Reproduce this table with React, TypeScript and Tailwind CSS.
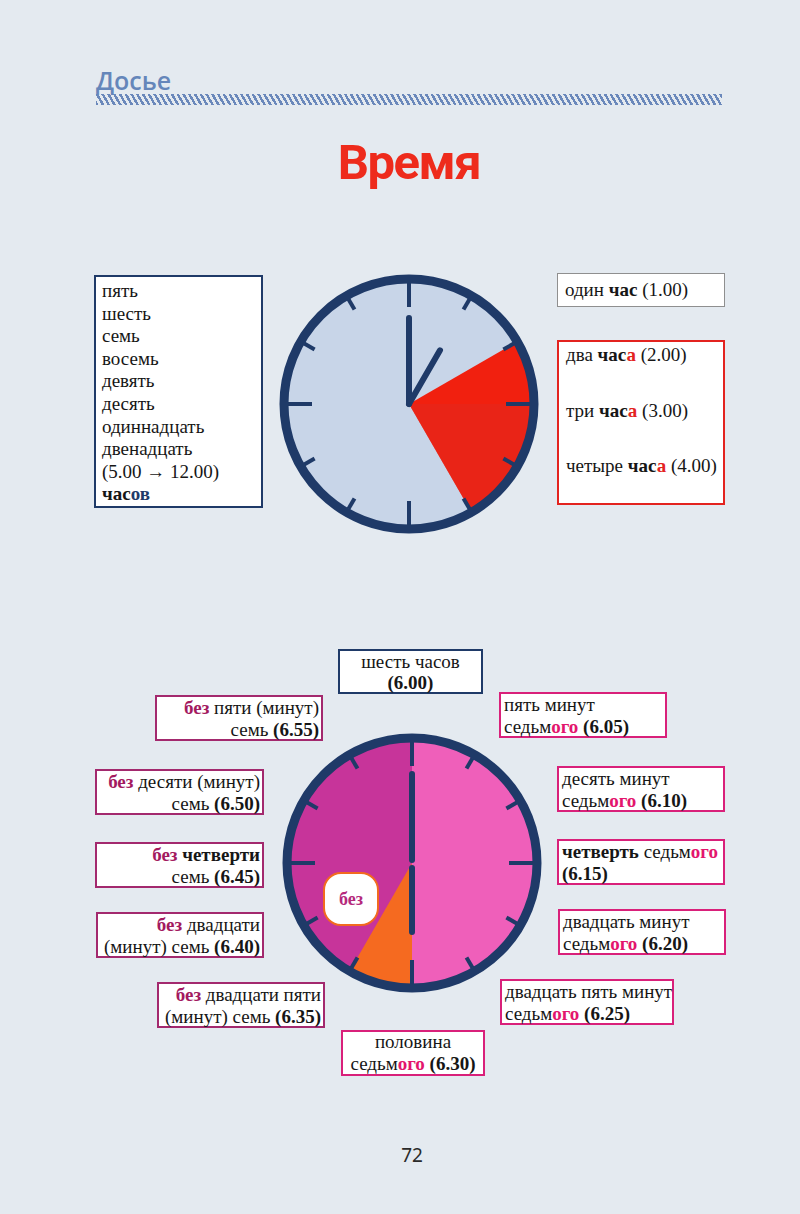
import React from 'react';

const NAVY = '#1f3a68';

function pt(cx: number, cy: number, r: number, deg: number) {
  const a = ((deg - 90) * Math.PI) / 180;
  return [cx + r * Math.cos(a), cy + r * Math.sin(a)];
}

function sector(cx: number, cy: number, r: number, a0: number, a1: number) {
  const [x0, y0] = pt(cx, cy, r, a0);
  const [x1, y1] = pt(cx, cy, r, a1);
  const large = a1 - a0 > 180 ? 1 : 0;
  return `M${cx} ${cy} L${x0} ${y0} A${r} ${r} 0 ${large} 1 ${x1} ${y1} Z`;
}

function Ticks() {
  return (
    <>
      {Array.from({ length: 12 }).map((_, i) => {
        const long = i % 3 === 0;
        const [x0, y0] = pt(131, 131, 121, i * 30);
        const [x1, y1] = pt(131, 131, long ? 97 : 109, i * 30);
        return (
          <line key={i} x1={x0} y1={y0} x2={x1} y2={y1} stroke={NAVY} strokeWidth={4} />
        );
      })}
    </>
  );
}

function HourClock() {
  const [hx, hy] = pt(131, 131, 62, 30);
  return (
    <svg width="262" height="262" viewBox="0 0 262 262">
      <circle cx="131" cy="131" r="122" fill="#c8d5e8" />
      <path d={sector(131, 131, 122, 60, 150)} fill="#f1200f" />
      <path d={sector(131, 131, 122, 90, 150)} fill="#e5281c" opacity="0.6" />
      <Ticks />
      <circle cx="131" cy="131" r="125" fill="none" stroke={NAVY} strokeWidth="9" />
      <line x1="131" y1="131" x2="131" y2="45" stroke={NAVY} strokeWidth="6" strokeLinecap="round" />
      <line x1="131" y1="131" x2={hx} y2={hy} stroke={NAVY} strokeWidth="6" strokeLinecap="round" />
    </svg>
  );
}

function HalfClock() {
  return (
    <svg width="262" height="262" viewBox="0 0 262 262">
      <path d={sector(131, 131, 122, 0, 180)} fill="#ef5fba" />
      <path d={sector(131, 131, 122, 180, 360)} fill="#c7349a" />
      <path d={sector(131, 131, 122, 180, 210)} fill="#f56a20" />
      <Ticks />
      <circle cx="131" cy="131" r="125" fill="none" stroke={NAVY} strokeWidth="9" />
      <line x1="131" y1="128" x2="131" y2="42" stroke={NAVY} strokeWidth="6" strokeLinecap="round" />
      <line x1="131" y1="136" x2="131" y2="200" stroke={NAVY} strokeWidth="6" strokeLinecap="round" />
    </svg>
  );
}

const Bez = () => <b className="text-[#a31a5f]">без</b>;
const Ogo = () => <b className="text-[#e3166d]">ого</b>;

const leftBox =
  'absolute h-[46px] whitespace-nowrap border-2 border-[#a3296e] bg-white px-[2px] text-right leading-[22px]';
const rightBox =
  'absolute h-[46px] whitespace-nowrap border-2 border-[#d9207a] bg-white px-[3px] text-left leading-[22px]';

export default function App() {
  return (
    <div className="relative h-[1214px] w-[800px] overflow-hidden bg-[#e4eaf0] pt-[68px] font-['Liberation_Serif',serif] text-[19px] text-[#161616]">
      {/* header */}
      <div className="ml-[96px] w-[626px]">
        <div className="font-['Open_Sans',sans-serif] text-[25px] font-semibold leading-[25px] text-[#6586ba]">
          Досье
        </div>
        <div className="mt-[1px] h-[11px] bg-[repeating-linear-gradient(60deg,#6a88bb_0_2.4px,transparent_2.4px_5px)]" />
      </div>

      <h1 className="mt-[30px] pl-[18px] text-center font-['Roboto',sans-serif] text-[49px] font-bold leading-[56px] tracking-[-1.5px] text-[#ee2b1c]">
        Время
      </h1>

      {/* hours */}
      <div className="mt-[82px] flex items-start pl-[94px]">
        <div className="mt-[2px] h-[233px] w-[169px] whitespace-nowrap border-2 border-[#1f3a68] bg-white pl-[6px] pt-[3px] leading-[22.6px]">
          <div>пять</div>
          <div>шесть</div>
          <div>семь</div>
          <div>восемь</div>
          <div>девять</div>
          <div>десять</div>
          <div>одиннадцать</div>
          <div>двенадцать</div>
          <div>(5.00 → 12.00)</div>
          <div className="font-bold">
            час<span className="text-[#1f3a68]">ов</span>
          </div>
        </div>
        <div className="ml-[15px]">
          <HourClock />
        </div>
        <div className="ml-[17px] flex w-[168px] flex-col whitespace-nowrap">
          <div className="flex h-[34px] items-center border border-[#8f8f8f] bg-white pl-[7px] leading-[22px]">
            <span>
              один <b>час</b> (1.00)
            </span>
          </div>
          <div className="mt-[33px] flex h-[165px] flex-col gap-[33.5px] border-2 border-[#e3231f] bg-white pl-[7px] pt-[2px] leading-[22px]">
            <div>
              два <b>час<span className="text-[#e3231f]">а</span></b> (2.00)
            </div>
            <div>
              три <b>час<span className="text-[#e3231f]">а</span></b> (3.00)
            </div>
            <div>
              четыре <b>час<span className="text-[#e3231f]">а</span></b> (4.00)
            </div>
          </div>
        </div>
      </div>

      {/* minutes diagram */}
      <div className="relative mt-[110px] h-[435px] w-full">
        <div className="absolute left-[281px] top-[87px]">
          <HalfClock />
          <div className="absolute left-[42px] top-[140px] flex h-[54px] w-[56px] items-center justify-center rounded-[18px] border-[2.5px] border-[#f26a1f] bg-white text-[18px] font-bold text-[#b52a7c]">
            без
          </div>
        </div>

        <div className="absolute left-[338px] top-[4px] flex h-[45px] w-[145px] flex-col items-center justify-center whitespace-nowrap border-2 border-[#1f3a68] bg-white leading-[21px]">
          <div>шесть часов</div>
          <div className="font-bold">(6.00)</div>
        </div>

        <div className={`${leftBox} left-[155px] top-[50px] w-[168px]`}>
          <div><Bez /> пяти (минут)</div>
          <div>семь <b>(6.55)</b></div>
        </div>
        <div className={`${leftBox} left-[95px] top-[124px] w-[169px]`}>
          <div><Bez /> десяти (минут)</div>
          <div>семь <b>(6.50)</b></div>
        </div>
        <div className={`${leftBox} left-[95px] top-[197px] w-[169px]`}>
          <div><Bez /> <b>четверти</b></div>
          <div>семь <b>(6.45)</b></div>
        </div>
        <div className={`${leftBox} left-[96px] top-[267px] w-[168px]`}>
          <div><Bez /> двадцати</div>
          <div>(минут) семь <b>(6.40)</b></div>
        </div>
        <div className={`${leftBox} left-[157px] top-[337px] w-[168px]`}>
          <div><Bez /> двадцати пяти</div>
          <div>(минут) семь <b>(6.35)</b></div>
        </div>

        <div className={`${rightBox} left-[499px] top-[47px] w-[168px]`}>
          <div>пять минут</div>
          <div>седьм<Ogo /> <b>(6.05)</b></div>
        </div>
        <div className={`${rightBox} left-[557px] top-[121px] w-[168px]`}>
          <div>десять минут</div>
          <div>седьм<Ogo /> <b>(6.10)</b></div>
        </div>
        <div className={`${rightBox} left-[557px] top-[194px] w-[168px]`}>
          <div><b>четверть</b> седьм<Ogo /></div>
          <div><b>(6.15)</b></div>
        </div>
        <div className={`${rightBox} left-[558px] top-[264px] w-[168px]`}>
          <div>двадцать минут</div>
          <div>седьм<Ogo /> <b>(6.20)</b></div>
        </div>
        <div className={`${rightBox} left-[500px] top-[334px] w-[174px]`}>
          <div>двадцать пять минут</div>
          <div>седьм<Ogo /> <b>(6.25)</b></div>
        </div>

        <div className="absolute left-[341px] top-[385px] flex h-[46px] w-[144px] flex-col items-center justify-center whitespace-nowrap border-2 border-[#d9207a] bg-white leading-[22px]">
          <div>половина</div>
          <div>седьм<Ogo /> <b>(6.30)</b></div>
        </div>
      </div>

      <div className="mt-[63px] pl-[24px] text-center font-['Noto_Sans',sans-serif] text-[19px] leading-[24px] text-[#2a2a2a]">
        72
      </div>
    </div>
  );
}
